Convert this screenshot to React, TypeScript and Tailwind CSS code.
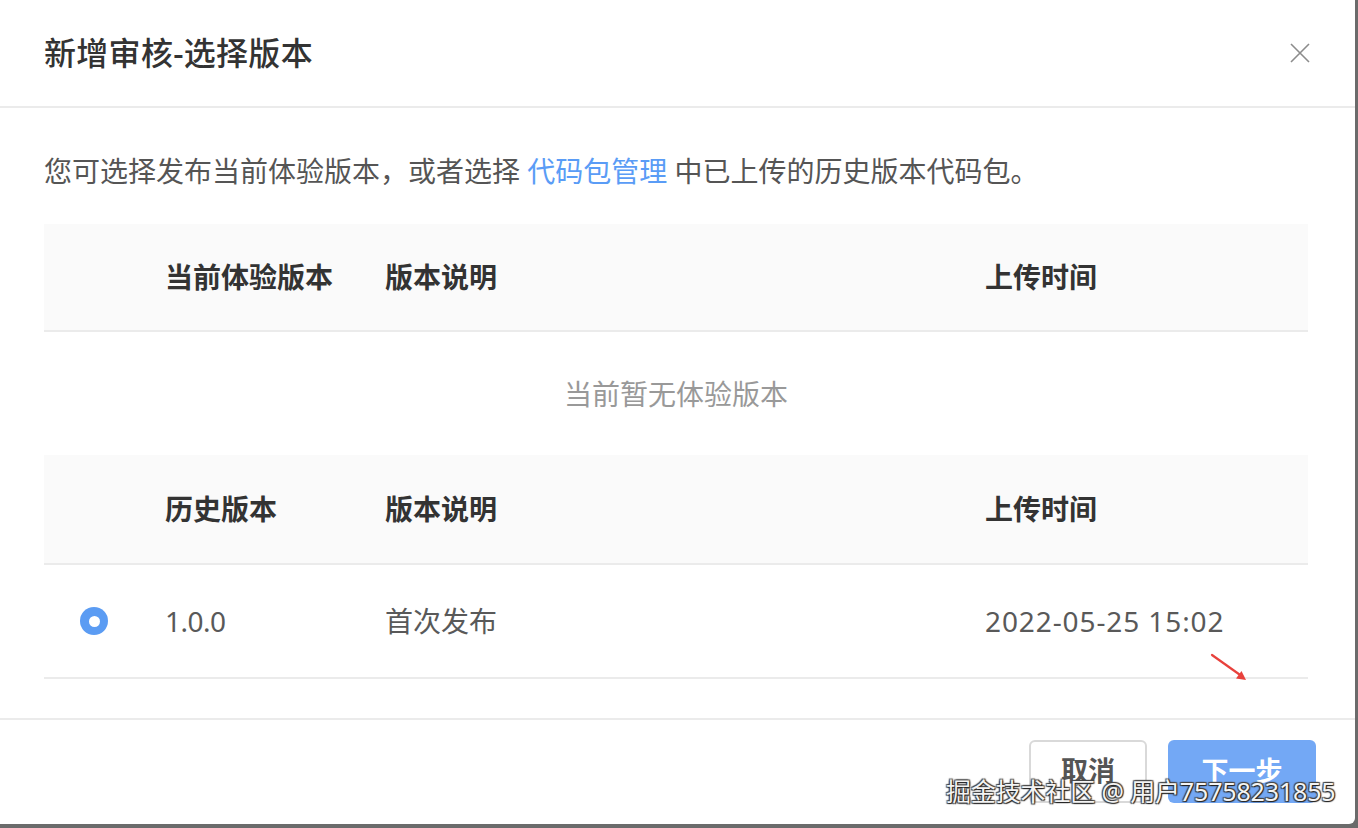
import React from "react";

const font = { fontFamily: '"Noto Sans", "Noto Sans CJK SC", sans-serif' };

function Radio() {
  return (
    <div className="w-[28px] h-[28px] rounded-full bg-[#5b9cf3] flex items-center justify-center">
      <div className="w-[11px] h-[11px] rounded-full bg-white" />
    </div>
  );
}

export default function App() {
  return (
    <div className="w-[1358px] h-[828px] bg-[#6b6b6b] relative overflow-hidden" style={font}>
      <div className="w-[1355px] h-[824px] bg-white rounded-br-[6px] flex flex-col">
        {/* Header */}
        <div className="h-[108px] shrink-0 border-b-2 border-[#ebebeb] flex items-center justify-between pl-[44px] pr-[45px]">
          <div className="text-[32px] font-medium text-[#333] tracking-[0.3px]">新增审核-选择版本</div>
          <svg width="20" height="20" viewBox="0 0 20 20" fill="none">
            <path d="M1 1L19 19M19 1L1 19" stroke="#8c8c8c" strokeWidth="1.6" />
          </svg>
        </div>

        {/* Body */}
        <div className="flex-1 pl-[44px] pr-[47px] pt-[43px]">
          <div className="h-[40px] leading-[40px] text-[28px] text-[#555] whitespace-nowrap">
            您可选择发布当前体验版本，或者选择 <span className="text-[#5a9cf6]">代码包管理</span> 中已上传的历史版本代码包。
          </div>
          <div className="mt-[33px]">
            <div className="h-[108px] bg-[#fafafa] border-b-2 border-[#ebebeb] grid grid-cols-[121px_220px_600px_1fr] items-center text-[28px] font-semibold text-[#333]">
              <div />
              <div>当前体验版本</div>
              <div>版本说明</div>
              <div>上传时间</div>
            </div>
            <div className="h-[123px] flex items-center justify-center text-[28px] text-[#999]">当前暂无体验版本</div>
            <div className="h-[110px] bg-[#fafafa] border-b-2 border-[#ebebeb] grid grid-cols-[121px_220px_600px_1fr] items-center text-[28px] font-semibold text-[#333]">
              <div />
              <div>历史版本</div>
              <div>版本说明</div>
              <div>上传时间</div>
            </div>
            <div className="h-[114px] border-b-2 border-[#ebebeb] grid grid-cols-[121px_220px_600px_1fr] items-center text-[28px] text-[#595959]">
              <div className="flex pl-[36px]">
                <Radio />
              </div>
              <div className="tracking-[-0.5px]">1.0.0</div>
              <div>首次发布</div>
              <div className="tracking-[0.9px]">2022-05-25 15:02</div>
            </div>
          </div>
        </div>

        {/* Footer */}
        <div className="h-[106px] shrink-0 border-t-2 border-[#ebebeb] flex justify-end items-start gap-[21px] pt-[20px] pr-[39px]">
          <button className="w-[118px] h-[63px] rounded-[6px] border-2 border-[#d9d9d9] bg-white text-[27px] font-semibold text-[#555]">取消</button>
          <button className="w-[148px] h-[63px] rounded-[6px] bg-[#73a8f5] text-[27px] font-semibold text-white">下一步</button>
        </div>
      </div>

      {/* Red arrow annotation */}
      <svg className="absolute left-[1205px] top-[648px]" width="50" height="40" viewBox="0 0 50 40" fill="none">
        <path d="M7 7L38 29" stroke="#e8413c" strokeWidth="2.2" strokeLinecap="round" />
        <path d="M41 32L31 30.5L36.5 23Z" fill="#e8413c" />
      </svg>

      {/* Watermark */}
      <div className="absolute left-[946px] top-[774px] text-[25px] leading-[34px] tracking-[-0.15px] text-[#f4f4f4] whitespace-nowrap [text-shadow:1px_1px_1px_#222,-1px_-1px_1px_#444,1px_-1px_1px_#444,-1px_1px_1px_#444]">
        掘金技术社区 @ 用户75758231855
      </div>
    </div>
  );
}
